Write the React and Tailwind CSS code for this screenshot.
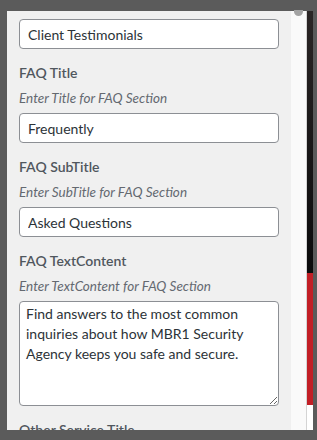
import React from "react";

const fields = [
  { label: "FAQ Title", hint: "Enter Title for FAQ Section", value: "Frequently" },
  { label: "FAQ SubTitle", hint: "Enter SubTitle for FAQ Section", value: "Asked Questions" },
];

const Field = ({ label, hint, children }) => (
  <div className="flex flex-col">
    <div className="mt-[14px] text-[14px] leading-[20px] font-semibold text-[#50575e]">{label}</div>
    <div className="mt-[6px] text-[13.5px] leading-[18px] italic text-[#646970]">{hint}</div>
    <div className="mt-[6px]">{children}</div>
  </div>
);

const inputCls =
  "block w-full h-[30px] rounded-[4px] border border-[#8c8f94] bg-white px-[8px] text-[14px] text-[#2c3338] outline-none";

export default function App() {
  return (
    <div
      className="flex w-[317px] h-[440px] overflow-hidden bg-[#5b5b5b] pt-[11px] pl-[7px] pr-[4px] pb-[10px]"
      style={{ fontFamily: 'Lato, "Open Sans", sans-serif' }}
    >
      {/* Settings panel */}
      <div className="w-[284px] h-full overflow-hidden bg-[#f0f0f0] px-[12px] pt-[8px]">
        <input className={inputCls} defaultValue="Client Testimonials" />

        {fields.map((f) => (
          <Field key={f.label} label={f.label} hint={f.hint}>
            <input className={inputCls} defaultValue={f.value} />
          </Field>
        ))}

        <Field label="FAQ TextContent" hint="Enter TextContent for FAQ Section">
          <textarea
            className="block w-full h-[105px] rounded-[4px] border border-[#8c8f94] bg-white px-[6px] py-[2px] text-[14px] leading-[20px] text-[#2c3338] outline-none"
            defaultValue="Find answers to the most common inquiries about how MBR1 Security Agency keeps you safe and secure."
          />
        </Field>

        <div className="mt-[14px] text-[14px] leading-[20px] font-semibold text-[#50575e]">Other Service Title</div>
      </div>

      {/* Scrollbar track */}
      <div className="w-[15px] h-full bg-[#fafafa] flex justify-center">
        <div className="w-[9px] h-[6px] -mt-[1px] rounded-b-full bg-[#a3a3a3]" />
      </div>
      <div className="w-px h-full bg-[#d4d4d4]" />

      {/* Page behind */}
      <div className="w-[6px] h-full flex flex-col">
        <div className="h-[262px] bg-gradient-to-b from-[#2b2626] to-[#0b0b0c]" />
        <div className="h-[132px] bg-[#c21f26]" />
        <div className="flex-1 bg-white" />
      </div>
    </div>
  );
}
